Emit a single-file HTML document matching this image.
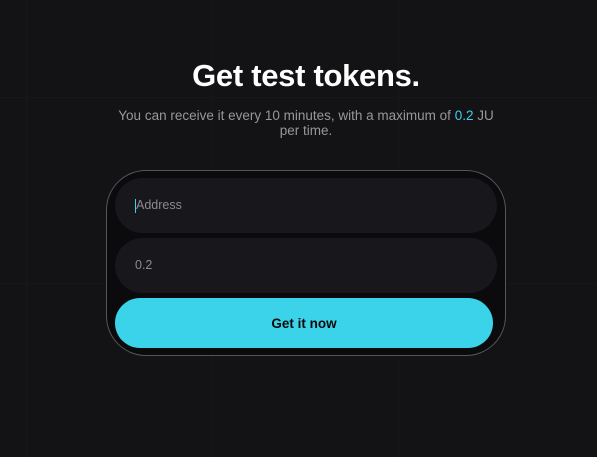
<!DOCTYPE html>
<html><head><style>
html,body{margin:0;padding:0}
body{width:597px;height:457px;background:#131316;position:relative;overflow:hidden;font-family:"Liberation Sans",sans-serif}
.gl{position:absolute;background:#17171a}
h1{position:absolute;left:0;width:612px;top:58px;margin:0;text-align:center;color:#fff;font-size:31px;font-weight:bold;letter-spacing:-0.3px}
.sub{position:absolute;left:110px;width:392px;top:108px;text-align:center;color:#97979c;font-size:13.5px;line-height:15px}
.sub b{color:#3bd3ea;font-weight:normal}
.card{position:absolute;left:106px;top:170px;width:400px;height:186px;border:1px solid #55555a;border-radius:40px;background:#0b0b0e;box-sizing:border-box}
.in{position:absolute;left:115px;width:382px;height:55px;border-radius:28px;background:#18181c;color:#8a8a8f;font-size:12.5px;line-height:55px;box-sizing:border-box;padding-left:20px}
.btn{position:absolute;left:115px;top:298px;width:378px;height:50px;border-radius:25px;background:#3bd3ea;color:#0a0a0a;font-weight:bold;font-size:13.5px;line-height:52px;text-align:center}
.cur{display:inline-block;width:1px;height:14px;background:#3bd3ea;vertical-align:middle;margin-right:0}
</style></head><body>
<div class="gl" style="left:26px;top:0;width:1px;height:457px"></div>
<div class="gl" style="left:212px;top:0;width:1px;height:457px"></div>
<div class="gl" style="left:398px;top:0;width:1px;height:457px"></div>
<div class="gl" style="left:0;top:97px;width:597px;height:1px"></div>
<div class="gl" style="left:0;top:283px;width:597px;height:1px"></div>
<h1>Get test tokens.</h1>
<div class="sub">You can receive it every 10 minutes, with a maximum of <b>0.2</b> JU<br>per time.</div>
<div class="card"></div>
<div class="in" style="top:178px"><span class="cur"></span>Address</div>
<div class="in" style="top:238px">0.2</div>
<div class="btn">Get it now</div>
</body></html>
